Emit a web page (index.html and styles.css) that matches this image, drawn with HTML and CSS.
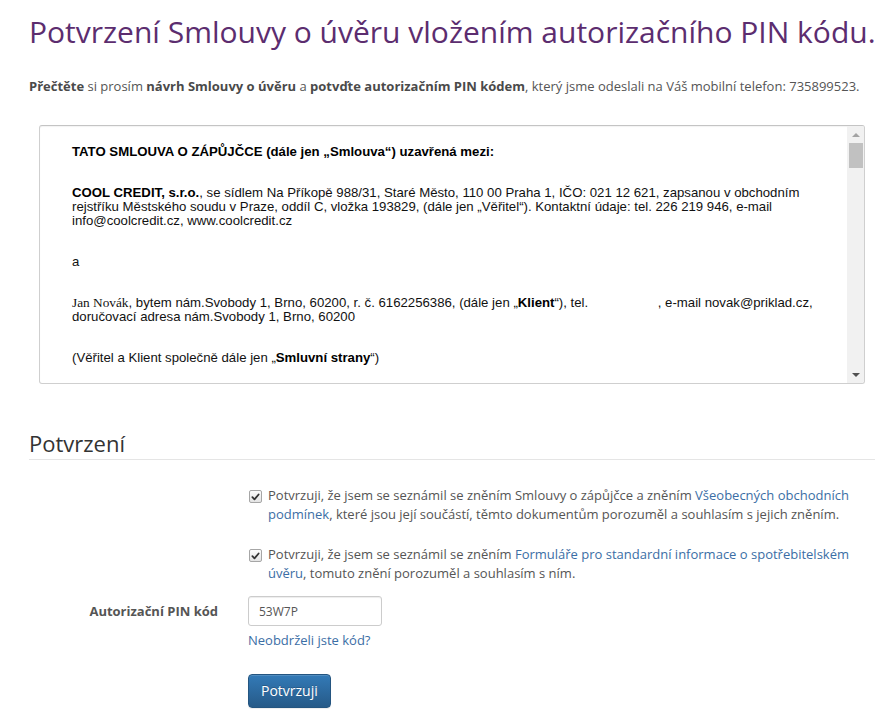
FILE: index.html
```html
<!DOCTYPE html>
<html lang="cs">
<head>
<meta charset="utf-8">
<title>Potvrzení Smlouvy o úvěru</title>
<link rel="stylesheet" href="styles.css">
</head>
<body>
<div class="page">
  <h1 class="title">Potvrzení Smlouvy o úvěru vložením autorizačního PIN kódu.</h1>
  <p class="intro"><b>Přečtěte</b> si prosím <b>návrh Smlouvy o úvěru</b> a <b>potvďte autorizačním PIN kódem</b>, který jsme odeslali na Váš mobilní telefon: 735899523.</p>

  <div class="contract">
    <div class="contract-body">
      <p><b>TATO SMLOUVA O ZÁPŮJČCE (dále jen „Smlouva“) uzavřená mezi:</b></p>
      <p><b>COOL CREDIT, s.r.o.</b>, se sídlem Na Příkopě 988/31, Staré Město, 110 00 Praha 1, IČO: 021 12 621, zapsanou v obchodním rejstříku Městského soudu v Praze, oddíl C, vložka 193829, (dále jen „Věřitel“). Kontaktní údaje: tel. 226 219 946, e-mail info@coolcredit.cz, www.coolcredit.cz</p>
      <p>a</p>
      <p><span class="serif">Jan Novák</span>, bytem nám.Svobody 1, Brno, 60200, r. č. 6162256386, (dále jen „<b>Klient</b>“), tel. <span class="blank"></span>, e-mail novak@priklad.cz, doručovací adresa nám.Svobody 1, Brno, 60200</p>
      <p>(Věřitel a Klient společně dále jen „<b>Smluvní strany</b>“)</p>
    </div>
    <div class="scrollbar">
      <div class="sb-btn"><span class="tri-up"></span></div>
      <div class="sb-track"><div class="sb-thumb"></div></div>
      <div class="sb-btn"><span class="tri-down"></span></div>
    </div>
  </div>

  <h2 class="section">Potvrzení</h2>

  <div class="form">
    <div class="form-row">
      <div class="label-col"></div>
      <div class="field-col">
        <div class="check">
          <span class="box"><svg viewBox="0 0 12 12" width="12" height="12"><path d="M2.6 6.2 L4.9 8.6 L9.4 3.2" fill="none" stroke="#333" stroke-width="1.9" stroke-linecap="round" stroke-linejoin="round"/></svg></span>
          <span class="check-text">Potvrzuji, že jsem se seznámil se zněním Smlouvy o zápůjčce a zněním <a href="#">Všeobecných obchodních podmínek</a>, které jsou její součástí, těmto dokumentům porozuměl a souhlasím s jejich zněním.</span>
        </div>
        <div class="check">
          <span class="box"><svg viewBox="0 0 12 12" width="12" height="12"><path d="M2.6 6.2 L4.9 8.6 L9.4 3.2" fill="none" stroke="#333" stroke-width="1.9" stroke-linecap="round" stroke-linejoin="round"/></svg></span>
          <span class="check-text">Potvrzuji, že jsem se seznámil se zněním <a href="#">Formuláře pro standardní informace o spotřebitelském úvěru</a>, tomuto znění porozuměl a souhlasím s ním.</span>
        </div>
      </div>
    </div>
    <div class="form-row pin-row">
      <div class="label-col"><label class="pin-label" for="pin">Autorizační PIN kód</label></div>
      <div class="field-col">
        <input id="pin" class="pin-input" type="text" value="53W7P">
        <a class="help" href="#">Neobdrželi jste kód?</a>
        <button class="btn" type="button">Potvrzuji</button>
      </div>
    </div>
  </div>
</div>
</body>
</html>
```
FILE: styles.css
```css
html, body {
  margin: 0;
  padding: 0;
  background: #fff;
}
body {
  font-family: "Open Sans", "Liberation Sans", sans-serif;
  font-size: 13px;
  line-height: 19px;
  color: #555;
}
.page {
  padding: 0 12px 30px 29px;
}
.title {
  margin: 12px 0 0 0;
  font-size: 30px;
  line-height: 40px;
  font-weight: 400;
  color: #5c2d6f;
  white-space: nowrap;
}
.intro {
  margin: 25px 0 0 0;
  white-space: nowrap;
}
.intro b {
  color: #4a4a4a;
}
.contract {
  margin: 29px 10px 0 10px;
  height: 257px;
  border: 1px solid #cfcfcf;
  border-top-color: #c4c4c4;
  border-radius: 3px;
  box-shadow: inset 0 1px 1px rgba(0,0,0,.05);
  display: flex;
  overflow: hidden;
}
.contract-body {
  flex: 1;
  overflow: hidden;
  padding: 19px 22px 0 32px;
  font-family: "Liberation Sans", Arial, sans-serif;
  font-size: 13.2px;
  line-height: 14px;
  color: #111;
}
.contract-body p {
  margin: 0 0 27px 0;
}
.contract-body b {
  color: #000;
}
.serif {
  font-family: "Liberation Serif", "Times New Roman", serif;
  font-size: 13.3px;
}
.blank {
  display: inline-block;
  width: 66px;
}
.scrollbar {
  width: 17px;
  flex: none;
  background: #f1f1f1;
  display: flex;
  flex-direction: column;
}
.sb-btn {
  height: 17px;
  display: flex;
  align-items: center;
  justify-content: center;
}
.tri-up, .tri-down {
  width: 0;
  height: 0;
  border-left: 4px solid transparent;
  border-right: 4px solid transparent;
}
.tri-up {
  border-bottom: 4px solid #a3a3a3;
}
.tri-down {
  border-top: 4px solid #505050;
}
.sb-track {
  flex: 1;
  padding: 0 1px 0 2px;
}
.sb-thumb {
  height: 25px;
  background: #c1c1c1;
}
.section {
  margin: 44px 0 0 0;
  font-size: 22px;
  line-height: 30px;
  font-weight: 400;
  color: #333;
  padding-bottom: 1px;
  border-bottom: 1px solid #e5e5e5;
}
.form {
  margin-top: 26px;
}
.form-row {
  display: grid;
  grid-template-columns: 204px 1fr;
}
.label-col {
  padding-right: 15px;
  text-align: right;
}
.field-col {
  padding-left: 15px;
}
.check {
  display: flex;
  align-items: flex-start;
  gap: 6px;
  margin-bottom: 21px;
  padding-right: 4px;
}
.check:last-child {
  margin-bottom: 0;
}
.box {
  flex: none;
  width: 11px;
  height: 11px;
  margin: 4px 0 0 1px;
  border: 1px solid #a6a6a6;
  border-radius: 2px;
  background: linear-gradient(#fcfcfc, #e4e4e4);
  display: flex;
  align-items: center;
  justify-content: center;
}
.box svg {
  display: block;
}
.check-text a, .help {
  color: #3b6ea5;
  text-decoration: none;
}
.pin-row {
  margin-top: 13px;
}
.pin-label {
  display: block;
  padding-top: 6px;
  font-weight: 700;
  color: #555;
}
.pin-input {
  display: block;
  box-sizing: border-box;
  width: 134px;
  height: 30px;
  margin: 0;
  padding: 5px 10px;
  border: 1px solid #ccc;
  border-radius: 3px;
  box-shadow: inset 0 1px 1px rgba(0,0,0,.075);
  font-family: "Open Sans", "Liberation Sans", sans-serif;
  font-size: 12px;
  color: #555;
  background: #fff;
}
.help {
  display: block;
  margin-top: 5px;
  width: max-content;
}
.btn {
  display: block;
  margin-top: 24px;
  box-sizing: border-box;
  height: 34px;
  padding: 6px 12px;
  border: 1px solid #245580;
  border-radius: 4px;
  background: linear-gradient(to bottom, #337ab7 0, #265a88 100%);
  box-shadow: inset 0 1px 0 rgba(255,255,255,.15), 0 1px 1px rgba(0,0,0,.075);
  font-family: "Open Sans", "Liberation Sans", sans-serif;
  font-size: 14px;
  line-height: 20px;
  color: #fff;
  text-shadow: 0 -1px 0 rgba(0,0,0,.2);
}
```
